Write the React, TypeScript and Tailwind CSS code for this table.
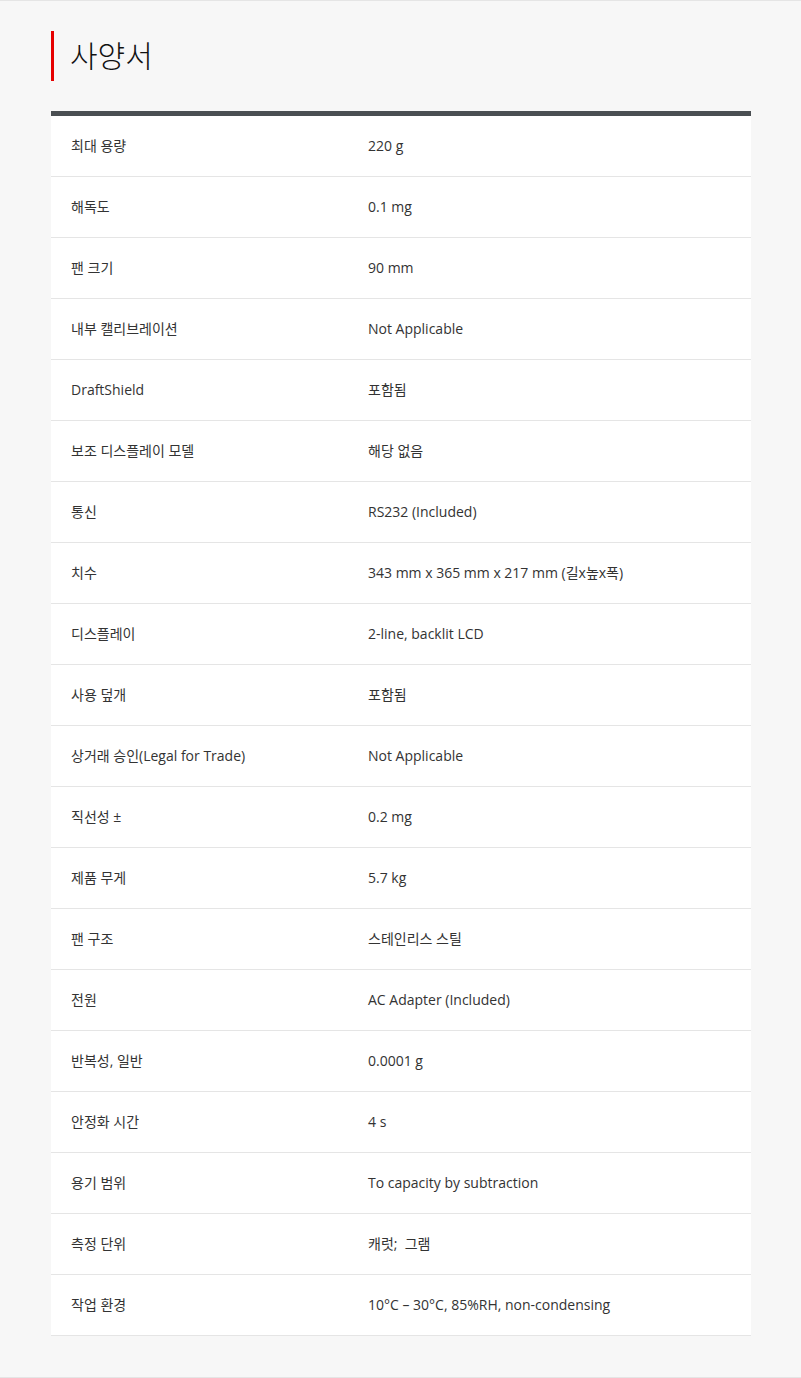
const specs: [string, string][] = [
  ["최대 용량", "220 g"],
  ["해독도", "0.1 mg"],
  ["팬 크기", "90 mm"],
  ["내부 캘리브레이션", "Not Applicable"],
  ["DraftShield", "포함됨"],
  ["보조 디스플레이 모델", "해당 없음"],
  ["통신", "RS232 (Included)"],
  ["치수", "343 mm x 365 mm x 217 mm (길x높x폭)"],
  ["디스플레이", "2-line, backlit LCD"],
  ["사용 덮개", "포함됨"],
  ["상거래 승인(Legal for Trade)", "Not Applicable"],
  ["직선성 ±", "0.2 mg"],
  ["제품 무게", "5.7 kg"],
  ["팬 구조", "스테인리스 스틸"],
  ["전원", "AC Adapter (Included)"],
  ["반복성, 일반", "0.0001 g"],
  ["안정화 시간", "4 s"],
  ["용기 범위", "To capacity by subtraction"],
  ["측정 단위", "캐럿;  그램"],
  ["작업 환경", "10°C – 30°C, 85%RH, non-condensing"],
];

export default function App() {
  return (
    <div
      className="min-h-[1378px] bg-[#f7f7f7] border-y border-[#e5e5e5] text-[#333]"
      style={{ fontFamily: '"Open Sans", "Noto Sans CJK KR", sans-serif' }}
    >
      <div className="ml-[51px] w-[700px] pt-[30px] pb-[40px]">
        <div className="border-l-[3px] border-[#e60000] h-[50px] flex items-center pl-[16px]">
          <h2 className="text-[30px] font-light text-[#111] leading-none">사양서</h2>
        </div>
        <div className="mt-[30px] border-t-[5px] border-[#4a4f52] bg-white">
          {specs.map(([k, v]) => (
            <div key={k} className="flex h-[61px] items-center pb-[2px] border-b border-[#e5e5e5] text-[14px]">
              <div className="w-[297px] pl-[20px]">{k}</div>
              <div className="pl-[20px] whitespace-pre">{v}</div>
            </div>
          ))}
        </div>
      </div>
    </div>
  );
}
